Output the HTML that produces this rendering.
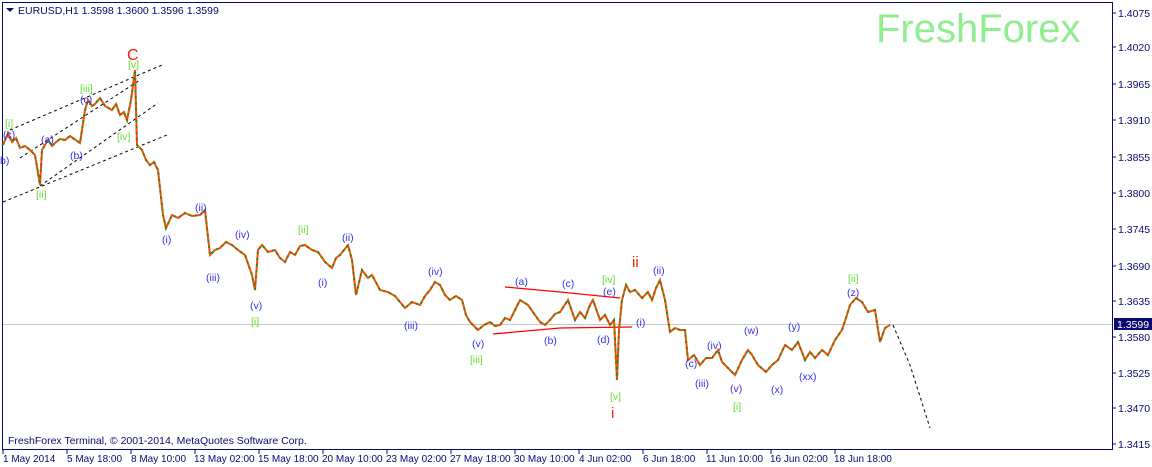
<!DOCTYPE html>
<html><head><meta charset="utf-8"><style>
html,body{margin:0;padding:0;background:#fff;width:1152px;height:467px;overflow:hidden}
svg{display:block}
text{font-family:"Liberation Sans",sans-serif;font-size:10.5px}
.g{fill:#66dd33}.b{fill:#3333ee}.r{fill:#ee2200}.ax{fill:#0a0a70}
.tx text{font-size:10px}
</style></head><body>
<svg width="1152" height="467" viewBox="0 0 1152 467" xmlns="http://www.w3.org/2000/svg">
<rect x="2.5" y="2.5" width="1110" height="447" fill="#fff" stroke="#0a0a70" stroke-width="1"/>
<text x="876" y="42" style="font-size:40px;font-family:'Liberation Sans',sans-serif;fill:#90ee90">FreshForex</text>
<line x1="3" y1="324.5" x2="1112" y2="324.5" stroke="#c8c8c8"/>
<g stroke="#000" stroke-dasharray="3,3" fill="none">
<line x1="10" y1="130" x2="162" y2="65"/>
<line x1="20" y1="158" x2="140" y2="80"/>
<line x1="40" y1="186" x2="158" y2="103"/>
<line x1="3" y1="202" x2="167" y2="135"/>
<polyline points="893,325 910,365 930,428"/>
</g>
<g stroke="#ff0000" stroke-width="1.3" fill="none">
<polyline points="505,287 560,292 620,298"/>
<polyline points="493,334 560,328 632,327"/>
</g>
<polyline fill="none" stroke="#ff4a00" stroke-width="2" points="3,145 8,133 12,142 16,138 20,148 25,146 30,150 35,155 40,185 42,150 48,140 52,146 55,143 60,139 65,140 70,136 80,143 85,110 88,100 92,106 95,104 100,98 105,106 112,110 116,104 120,115 124,112 127,120 131,100 135,70 137,145 142,150 146,160 150,165 154,162 158,170 163,215 166,228 172,215 178,218 185,213 192,216 200,215 205,210 210,255 215,250 220,248 226,242 232,245 238,250 245,255 252,275 255,290 258,250 262,245 268,252 275,250 280,258 285,262 290,252 295,255 300,246 305,245 312,250 318,252 325,262 332,268 336,258 340,255 348,245 352,260 356,295 362,270 368,278 372,275 380,290 388,292 395,296 400,302 405,308 412,302 420,305 425,296 430,290 435,282 440,285 445,295 450,300 456,296 462,300 466,315 470,322 478,330 484,325 490,322 495,326 500,325 505,318 510,320 515,310 520,300 528,305 535,315 540,322 545,325 550,320 555,314 560,312 568,300 575,320 580,312 585,318 590,305 593,300 600,320 605,315 610,325 614,320 617,380 619,330 622,300 626,285 630,292 635,290 642,298 648,292 652,300 656,288 660,280 665,300 670,332 675,328 680,330 685,330 688,360 694,355 700,365 706,358 712,358 718,350 722,362 728,368 735,375 742,360 748,350 752,355 758,365 766,372 772,365 778,360 785,345 792,350 798,342 805,360 810,352 815,358 822,350 828,355 835,340 842,330 846,318 850,305 856,298 862,302 868,312 875,310 880,342 885,328 890,325"/>
<polyline fill="none" stroke="#228b22" stroke-width="2" stroke-dasharray="2,4" points="3,145 8,133 12,142 16,138 20,148 25,146 30,150 35,155 40,185 42,150 48,140 52,146 55,143 60,139 65,140 70,136 80,143 85,110 88,100 92,106 95,104 100,98 105,106 112,110 116,104 120,115 124,112 127,120 131,100 135,70 137,145 142,150 146,160 150,165 154,162 158,170 163,215 166,228 172,215 178,218 185,213 192,216 200,215 205,210 210,255 215,250 220,248 226,242 232,245 238,250 245,255 252,275 255,290 258,250 262,245 268,252 275,250 280,258 285,262 290,252 295,255 300,246 305,245 312,250 318,252 325,262 332,268 336,258 340,255 348,245 352,260 356,295 362,270 368,278 372,275 380,290 388,292 395,296 400,302 405,308 412,302 420,305 425,296 430,290 435,282 440,285 445,295 450,300 456,296 462,300 466,315 470,322 478,330 484,325 490,322 495,326 500,325 505,318 510,320 515,310 520,300 528,305 535,315 540,322 545,325 550,320 555,314 560,312 568,300 575,320 580,312 585,318 590,305 593,300 600,320 605,315 610,325 614,320 617,380 619,330 622,300 626,285 630,292 635,290 642,298 648,292 652,300 656,288 660,280 665,300 670,332 675,328 680,330 685,330 688,360 694,355 700,365 706,358 712,358 718,350 722,362 728,368 735,375 742,360 748,350 752,355 758,365 766,372 772,365 778,360 785,345 792,350 798,342 805,360 810,352 815,358 822,350 828,355 835,340 842,330 846,318 850,305 856,298 862,302 868,312 875,310 880,342 885,328 890,325"/>
<path d="M6,8 h8 l-4,4z" fill="#0a0a70"/>
<text x="18" y="14" class="ax">EURUSD,H1  1.3598 1.3600 1.3596 1.3599</text>
<text x="127" y="60" class="r" style="font-size:16px">C</text>
<text x="632" y="267" class="r" style="font-size:15px">ii</text>
<text x="611" y="418" class="r" style="font-size:15px">i</text>
<g class="g">
<text x="5" y="127">[i]</text><text x="128" y="68">[v]</text><text x="80" y="92">[iii]</text>
<text x="117" y="140">[iv]</text><text x="36" y="198">[ii]</text><text x="298" y="233">[ii]</text>
<text x="251" y="325">[i]</text><text x="470" y="363">[iii]</text><text x="602" y="283">[iv]</text>
<text x="610" y="400">[v]</text><text x="733" y="410">[i]</text><text x="848" y="282">[ii]</text>
</g>
<g class="b">
<text x="3" y="138">(c)</text><text x="0" y="164">b)</text><text x="41" y="143">(a)</text><text x="80" y="103">(c)</text>
<text x="70" y="159">(b)</text><text x="195" y="211">(ii)</text><text x="162" y="243">(i)</text><text x="235" y="238">(iv)</text>
<text x="206" y="281">(iii)</text><text x="250" y="309">(v)</text><text x="342" y="241">(ii)</text><text x="318" y="286">(i)</text>
<text x="428" y="275">(iv)</text><text x="404" y="329">(iii)</text><text x="472" y="347">(v)</text>
<text x="515" y="285">(a)</text><text x="562" y="287">(c)</text><text x="603" y="295">(e)</text>
<text x="544" y="344">(b)</text><text x="597" y="343">(d)</text><text x="636" y="326">(i)</text>
<text x="653" y="274">(ii)</text><text x="685" y="367">(c)</text><text x="707" y="349">(iv)</text><text x="695" y="387">(iii)</text>
<text x="730" y="392">(v)</text><text x="744" y="334">(w)</text><text x="788" y="330">(y)</text><text x="771" y="393">(x)</text>
<text x="799" y="380">(xx)</text><text x="847" y="296">(z)</text>
</g>
<text x="8" y="444" class="ax">FreshForex Terminal, © 2001-2014, MetaQuotes Software Corp.</text>
<g class="ax">
<text x="1118" y="17">1.4075</text><text x="1118" y="51">1.4020</text><text x="1118" y="88">1.3965</text>
<text x="1118" y="124">1.3910</text><text x="1118" y="161">1.3855</text><text x="1118" y="197">1.3800</text>
<text x="1118" y="233">1.3745</text><text x="1118" y="270">1.3690</text><text x="1118" y="305">1.3635</text>
<text x="1118" y="341">1.3580</text><text x="1118" y="377">1.3525</text><text x="1118" y="412">1.3470</text>
<text x="1118" y="448">1.3415</text>
</g>
<g stroke="#0a0a70"><line x1="1112" y1="13" x2="1116" y2="13"/><line x1="1112" y1="47" x2="1116" y2="47"/><line x1="1112" y1="84" x2="1116" y2="84"/><line x1="1112" y1="120" x2="1116" y2="120"/><line x1="1112" y1="157" x2="1116" y2="157"/><line x1="1112" y1="193" x2="1116" y2="193"/><line x1="1112" y1="229" x2="1116" y2="229"/><line x1="1112" y1="266" x2="1116" y2="266"/><line x1="1112" y1="301" x2="1116" y2="301"/><line x1="1112" y1="337" x2="1116" y2="337"/><line x1="1112" y1="373" x2="1116" y2="373"/><line x1="1112" y1="408" x2="1116" y2="408"/><line x1="1112" y1="444" x2="1116" y2="444"/></g>
<rect x="1114" y="318" width="38" height="12" fill="#0a0a70"/>
<text x="1117" y="328" style="fill:#fff">1.3599</text>
<g class="ax tx">
<text x="3" y="462">1 May 2014</text><text x="67" y="462">5 May 18:00</text><text x="131" y="462">8 May 10:00</text>
<text x="194" y="462">13 May 02:00</text><text x="258" y="462">15 May 18:00</text><text x="322" y="462">20 May 10:00</text>
<text x="386" y="462">23 May 02:00</text><text x="450" y="462">27 May 18:00</text><text x="514" y="462">30 May 10:00</text>
<text x="579" y="462">4 Jun 02:00</text><text x="643" y="462">6 Jun 18:00</text><text x="706" y="462">11 Jun 10:00</text>
<text x="770" y="462">16 Jun 02:00</text><text x="834" y="462">18 Jun 18:00</text>
</g>
<g stroke="#0a0a70"><line x1="3" y1="449" x2="3" y2="454"/><line x1="67" y1="449" x2="67" y2="454"/><line x1="131" y1="449" x2="131" y2="454"/><line x1="195" y1="449" x2="195" y2="454"/><line x1="259" y1="449" x2="259" y2="454"/><line x1="323" y1="449" x2="323" y2="454"/><line x1="387" y1="449" x2="387" y2="454"/><line x1="451" y1="449" x2="451" y2="454"/><line x1="515" y1="449" x2="515" y2="454"/><line x1="579" y1="449" x2="579" y2="454"/><line x1="643" y1="449" x2="643" y2="454"/><line x1="707" y1="449" x2="707" y2="454"/><line x1="771" y1="449" x2="771" y2="454"/><line x1="835" y1="449" x2="835" y2="454"/></g>
</svg>
</body></html>
